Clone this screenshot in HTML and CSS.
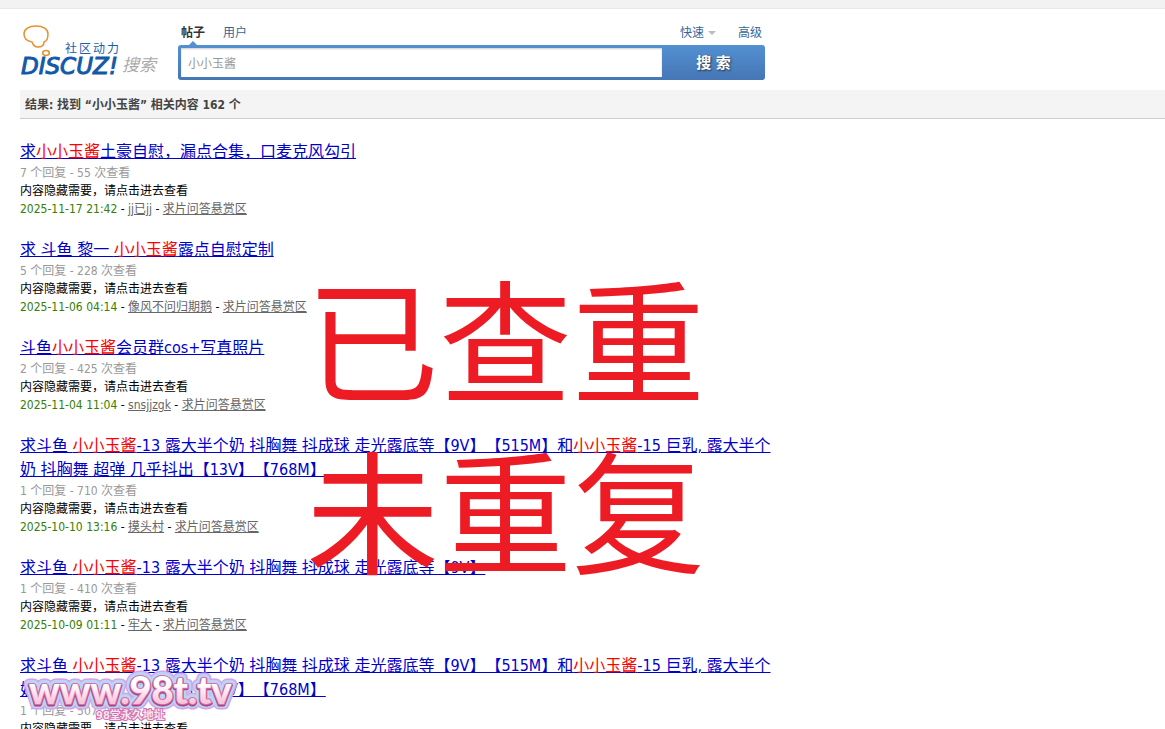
FILE: index.html
```html
<!DOCTYPE html>
<html lang="zh-CN">
<head>
    <meta charset="UTF-8">
    <meta name="viewport" content="width=device-width, initial-scale=1.0">
    <title>搜索</title>
    <link rel="stylesheet" href="styles.css">
</head>
<body>

<div class="topbar"></div>

<header class="search-header">
    <a href="#" class="logo" aria-label="Discuz!">
        <svg width="140" height="56" viewBox="0 0 140 56">
            <path d="M12 19 C7 18 4 15 4 11 C4 6 9 3 16 3 C23 3 28 6 28 11 C28 15 27 18 24 19 C24 22 22 24 18 24 C15 24 13 22 12 19 Z" fill="none" stroke="#e8902c" stroke-width="1.5"/>
            <ellipse cx="26" cy="30" rx="3.3" ry="2.4" fill="none" stroke="#e8902c" stroke-width="1.5"/>
            <text x="45" y="30" class="logo-sub">社区动力</text>
            <text x="1" y="51" class="logo-name">DISCUZ!</text>
            <text x="102" y="48" class="logo-search">搜索</text>
        </svg>
    </a>

    <form class="search-form" onsubmit="return false">
        <nav class="tabs">
            <a href="#" class="active">帖子</a>
            <a href="#">用户</a>
            <a href="#" class="quick">快速</a>
            <a href="#">高级</a>
        </nav>
        <div class="search-box">
            <input type="text" name="srchtxt" value="小小玉酱" aria-label="搜索">
            <button type="submit">搜 索</button>
        </div>
    </form>
</header>

<main class="results">
    <h2>结果: 找到 “<em>小小玉酱</em>” 相关内容 162 个</h2>

    <ul>
        <li>
            <h3><a href="#">求<strong>小小玉酱</strong>土豪自慰，漏点合集，口麦克风勾引</a></h3>
            <p class="count">7 个回复 - 55 次查看</p>
            <p>内容隐藏需要，请点击进去查看</p>
            <p class="info"><span>2025-11-17 21:42</span> - <a href="#">jj已jj</a> - <a href="#">求片问答悬赏区</a></p>
        </li>
        <li>
            <h3><a href="#">求 斗鱼 黎一 <strong>小小玉酱</strong>露点自慰定制</a></h3>
            <p class="count">5 个回复 - 228 次查看</p>
            <p>内容隐藏需要，请点击进去查看</p>
            <p class="info"><span>2025-11-06 04:14</span> - <a href="#">像风不问归期鹅</a> - <a href="#">求片问答悬赏区</a></p>
        </li>
        <li>
            <h3><a href="#">斗鱼<strong>小小玉酱</strong>会员群cos+写真照片</a></h3>
            <p class="count">2 个回复 - 425 次查看</p>
            <p>内容隐藏需要，请点击进去查看</p>
            <p class="info"><span>2025-11-04 11:04</span> - <a href="#">snsjjzgk</a> - <a href="#">求片问答悬赏区</a></p>
        </li>
        <li>
            <h3><a href="#">求斗鱼 <strong>小小玉酱</strong>-13 露大半个奶 抖胸舞 抖成球 走光露底等【9V】【515M】和<strong>小小玉酱</strong>-15 巨乳, 露大半个奶 抖胸舞 超弹 几乎抖出【13V】【768M】</a></h3>
            <p class="count">1 个回复 - 710 次查看</p>
            <p>内容隐藏需要，请点击进去查看</p>
            <p class="info"><span>2025-10-10 13:16</span> - <a href="#">摸头村</a> - <a href="#">求片问答悬赏区</a></p>
        </li>
        <li>
            <h3><a href="#">求斗鱼 <strong>小小玉酱</strong>-13 露大半个奶 抖胸舞 抖成球 走光露底等【9V】</a></h3>
            <p class="count">1 个回复 - 410 次查看</p>
            <p>内容隐藏需要，请点击进去查看</p>
            <p class="info"><span>2025-10-09 01:11</span> - <a href="#">牢大</a> - <a href="#">求片问答悬赏区</a></p>
        </li>
        <li>
            <h3><a href="#">求斗鱼 <strong>小小玉酱</strong>-13 露大半个奶 抖胸舞 抖成球 走光露底等【9V】【515M】和<strong>小小玉酱</strong>-15 巨乳, 露大半个奶 抖胸舞 超弹 几乎抖出【13V】【768M】</a></h3>
            <p class="count">1 个回复 - 507 次查看</p>
            <p>内容隐藏需要，请点击进去查看</p>
        </li>
    </ul>
</main>

<div class="stamp">已查重<br>未重复</div>

<svg class="watermark" width="230" height="64" viewBox="0 0 230 64">
    <defs>
        <linearGradient id="pink" x1="0" y1="0" x2="0" y2="1">
            <stop offset="0.4" stop-color="#ffffff"/>
            <stop offset="0.8" stop-color="#f8c4dc"/>
        </linearGradient>
    </defs>
    <g class="wm-url">
        <text x="9" y="40" stroke="#d3a5e6" stroke-width="11">www.98t.tv</text>
        <text x="9" y="40" stroke="#b9d4f8" stroke-width="8">www.98t.tv</text>
        <text x="9" y="41" stroke="#a8487f" stroke-width="3">www.98t.tv</text>
        <text x="9" y="40" stroke="#dc6fa6" stroke-width="2" fill="url(#pink)">www.98t.tv</text>
    </g>
    <text x="76" y="55" class="wm-note">98堂永久地址</text>
</svg>

</body>
</html>
```
FILE: styles.css
```css
* {
    box-sizing: border-box;
}

body {
    margin: 0;
    height: 100vh;
    overflow: hidden;
    position: relative;
    background: #fff;
    color: #000;
    font: 12px/18px "DejaVu Sans Condensed", "Noto Sans CJK SC", sans-serif;
    text-spacing-trim: space-all;
}

h2, h3, p, ul {
    margin: 0;
    padding: 0;
}

.topbar {
    height: 9px;
    background: #f2f2f2;
    border-bottom: 1px solid #e8e8e8;
}

/* header */
.search-header {
    display: flex;
    gap: 18px;
    padding: 14px 20px 10px;
}

.logo {
    height: 56px;
}

.logo svg {
    display: block;
}

.logo-sub {
    font-size: 12px;
    letter-spacing: 2px;
    fill: #1a5fa8;
}

.logo-name {
    font: italic 23px "DejaVu Sans", sans-serif;
    fill: #1259a8;
    stroke: #1259a8;
    stroke-width: 1;
}

.logo-search {
    font-size: 17px;
    font-style: italic;
    fill: #aaa;
}

.search-form {
    flex: 1;
    max-width: 587px;
}

.tabs {
    display: flex;
    gap: 18px;
    height: 22px;
    padding: 1px 3px 0;
}

.tabs a {
    color: #336699;
    text-decoration: none;
}

.tabs .active {
    position: relative;
    color: #333;
    font-weight: bold;
}

.tabs .active::after {
    content: "";
    position: absolute;
    left: 8px;
    bottom: 0;
    border: 4px solid transparent;
    border-top: 0;
    border-bottom-color: #5290d2;
}

.tabs .quick {
    display: flex;
    align-items: center;
    gap: 4px;
    height: 18px;
    margin-left: auto;
    padding-right: 4px;
}

.tabs .quick::after {
    content: "";
    border: 4px solid transparent;
    border-bottom: 0;
    border-top-color: #bbb;
}

.search-box {
    display: flex;
    height: 35px;
    padding: 3px 0 3px 3px;
    border-radius: 3px;
    background: linear-gradient(#5290d2, #4676b5);
}

.search-box input {
    flex: 1;
    min-width: 0;
    padding: 2px 7px 0;
    border: 0;
    outline: 0;
    background: #fff;
    box-shadow: inset 0 1px 2px #ccc;
    color: #999;
    font: inherit;
}

.search-box button {
    width: 103px;
    padding: 0;
    border: 0;
    background: none;
    color: #fff;
    font: bold 15px/20px "DejaVu Sans Condensed", "Noto Sans CJK SC", sans-serif;
    text-shadow: 1px 1px 2px #234;
    cursor: pointer;
}

/* results */
.results {
    padding-left: 20px;
}

.results h2 {
    padding: 6px 5px 4px;
    border-bottom: 1px solid #ccc;
    background: #f4f4f4;
    color: #444;
    font-size: 12px;
    line-height: 18px;
}

.results h2 em {
    font-style: normal;
}

.results ul {
    max-width: 760px;
    padding-top: 21px;
    list-style: none;
}

.results li {
    margin-bottom: 20px;
}

.results h3 {
    font-size: 16px;
    font-weight: normal;
    line-height: 24px;
}

.results h3 a {
    color: #0000cc;
}

.results h3 strong {
    color: #f00;
    font-weight: normal;
}

.count {
    color: #999;
}

.info span {
    color: #338000;
}

.info a {
    color: #666;
}

/* overlays */
.stamp {
    position: absolute;
    top: 250px;
    left: 306px;
    color: #ed1c24;
    font: 133px/171px "Noto Sans CJK SC", sans-serif;
    white-space: nowrap;
    pointer-events: none;
}

.watermark {
    position: absolute;
    top: 664px;
    left: 20px;
    overflow: visible;
    pointer-events: none;
}

.wm-url {
    font: 900 38px Lato, sans-serif;
    fill: none;
    stroke-linejoin: round;
}

.wm-url text {
    paint-order: stroke;
}

.wm-note {
    font-size: 11px;
    font-weight: bold;
    fill: #fbe3f0;
    stroke: #cf6fae;
    stroke-width: 2;
    paint-order: stroke;
}
```
